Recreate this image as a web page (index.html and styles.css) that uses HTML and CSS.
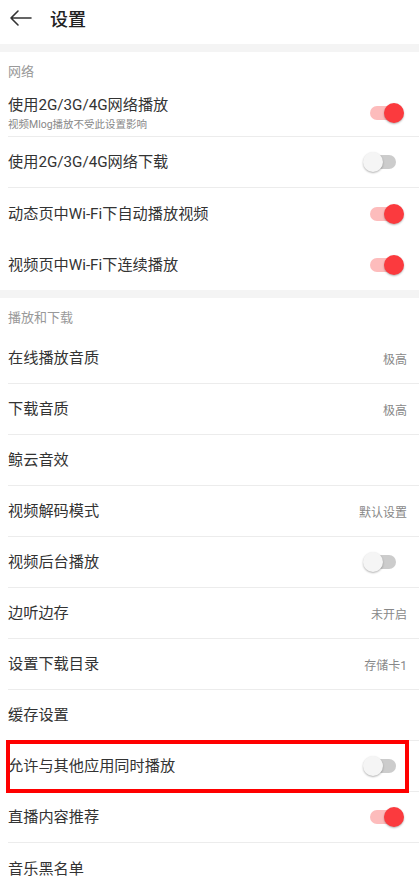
FILE: index.html
```html
<!DOCTYPE html>
<html lang="zh-CN">
<head>
    <meta charset="UTF-8">
    <meta name="viewport" content="width=device-width, initial-scale=1.0">
    <title>设置</title>
    <link rel="stylesheet" href="styles.css">
</head>
<body>
    <header class="top-bar">
        <svg class="back-icon" width="24" height="20" viewBox="0 0 24 20">
            <path d="M22 10H2M9 3L2 10L9 17" fill="none" stroke="#333" stroke-width="1.6" stroke-linecap="round" stroke-linejoin="round"/>
        </svg>
        <h1 class="title">设置</h1>
    </header>
    <div class="band"></div>

    <div class="section-label">网络</div>
    <div class="row row-tall line">
        <div class="row-text">
            <div class="row-title">使用2G/3G/4G网络播放</div>
            <div class="row-sub">视频Mlog播放不受此设置影响</div>
        </div>
        <span class="switch on"><span class="track"></span><span class="knob"></span></span>
    </div>
    <div class="row line">
        <div class="row-title">使用2G/3G/4G网络下载</div>
        <span class="switch"><span class="track"></span><span class="knob"></span></span>
    </div>
    <div class="row">
        <div class="row-title">动态页中Wi-Fi下自动播放视频</div>
        <span class="switch on"><span class="track"></span><span class="knob"></span></span>
    </div>
    <div class="row">
        <div class="row-title">视频页中Wi-Fi下连续播放</div>
        <span class="switch on"><span class="track"></span><span class="knob"></span></span>
    </div>
    <div class="band"></div>

    <div class="section-label">播放和下载</div>
    <div class="row line">
        <div class="row-title">在线播放音质</div>
        <span class="value">极高</span>
    </div>
    <div class="row line">
        <div class="row-title">下载音质</div>
        <span class="value">极高</span>
    </div>
    <div class="row line">
        <div class="row-title">鲸云音效</div>
    </div>
    <div class="row line">
        <div class="row-title">视频解码模式</div>
        <span class="value">默认设置</span>
    </div>
    <div class="row line">
        <div class="row-title">视频后台播放</div>
        <span class="switch"><span class="track"></span><span class="knob"></span></span>
    </div>
    <div class="row line">
        <div class="row-title">边听边存</div>
        <span class="value">未开启</span>
    </div>
    <div class="row line">
        <div class="row-title">设置下载目录</div>
        <span class="value">存储卡1</span>
    </div>
    <div class="row line">
        <div class="row-title">缓存设置</div>
    </div>
    <div class="row line">
        <div class="row-title">允许与其他应用同时播放</div>
        <span class="switch"><span class="track"></span><span class="knob"></span></span>
        <div class="highlight"></div>
    </div>
    <div class="row line">
        <div class="row-title">直播内容推荐</div>
        <span class="switch on"><span class="track"></span><span class="knob"></span></span>
    </div>
    <div class="row">
        <div class="row-title">音乐黑名单</div>
    </div>
</body>
</html>
```

FILE: styles.css
```css
body {
    margin: 0;
    background-color: #fff;
    font-family: Roboto, "Noto Sans CJK SC", sans-serif;
    color: #333;
    overflow: hidden;
}
.top-bar {
    height: 44px;
    display: flex;
    align-items: center;
    box-sizing: border-box;
    padding-left: 9px;
    padding-bottom: 8px;
}
.back-icon {
    display: block;
}
.title {
    margin: 0 0 0 17px;
    font-size: 18px;
    font-weight: 500;
    color: #222;
}
.band {
    height: 8px;
    background-color: #f4f4f4;
}
.section-label {
    height: 35px;
    box-sizing: border-box;
    padding: 10px 0 0 8px;
    font-size: 13px;
    line-height: 20px;
    color: #999;
}
.row {
    position: relative;
    height: 51px;
    box-sizing: border-box;
    margin-left: 8px;
    padding-right: 12px;
    display: flex;
    align-items: center;
    justify-content: space-between;
}
.row-tall {
    height: 50px;
    padding-top: 2px;
}
.line {
    border-bottom: 1px solid #ececec;
}
.row-title {
    font-size: 15.2px;
    line-height: 20px;
    color: #333;
}
/* chrome won't render below 12px, so scale it down */
.row-sub {
    font-size: 12px;
    line-height: 14px;
    color: #888;
    margin-top: 2px;
    white-space: nowrap;
    transform: scale(0.875);
    transform-origin: left center;
}
.value {
    font-size: 12px;
    color: #888;
}
.switch {
    position: relative;
    width: 41px;
    height: 20px;
    margin-right: 3px;
}
.track {
    position: absolute;
    left: 7px;
    top: 3px;
    width: 26px;
    height: 14px;
    border-radius: 7px;
    background-color: #ccc;
}
.knob {
    position: absolute;
    left: 0;
    top: 0;
    width: 20px;
    height: 20px;
    border-radius: 50%;
    background-color: #f5f5f5;
    box-shadow: 0 1px 2px rgba(0, 0, 0, 0.3);
}
.switch.on .track {
    background-color: #fdbcbc;
}
.switch.on .knob {
    left: auto;
    right: 0;
    background-color: #fb3a3e;
}
.highlight {
    position: absolute;
    left: -2px;
    right: 10px;
    top: -1px;
    bottom: -2px;
    border: 4px solid #f00;
}
```
